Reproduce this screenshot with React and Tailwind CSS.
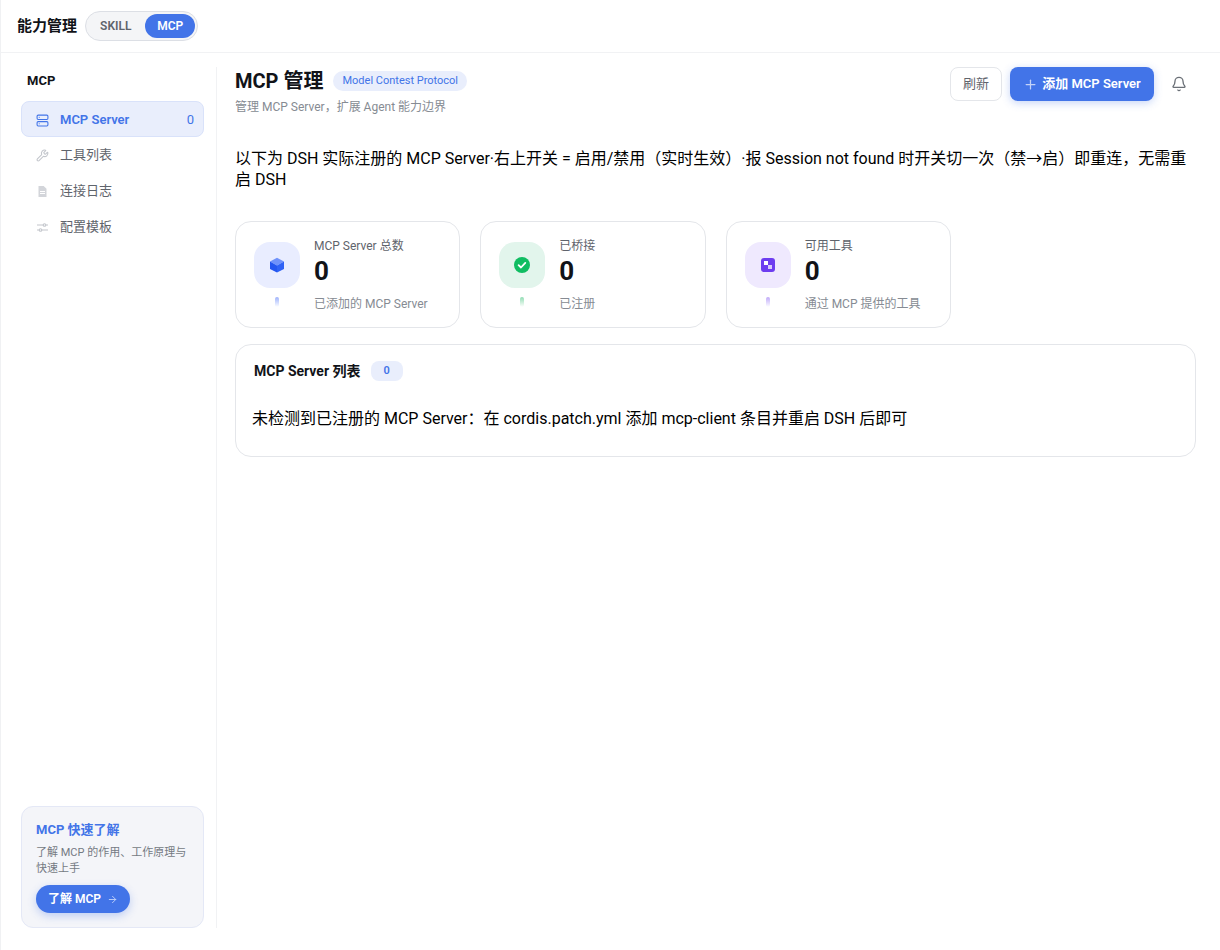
import React from 'react'
import { Server, Wrench, Plus, Bell, ArrowRight } from 'lucide-react'

const FONT = "font-['Roboto','Noto_Sans_CJK_SC',sans-serif]"

const Cube = () => (
  <svg width="16" height="16" viewBox="0 0 16 16">
    <path d="M8 .8l7 3.7L8 8.4 1 4.5z" fill="#6f92fb" />
    <path d="M1 4.5l7 3.9v7.2l-7-3.7z" fill="#2456f0" />
    <path d="M15 4.5L8 8.4v7.2l7-3.7z" fill="#2f62f5" />
  </svg>
)

const Check = () => (
  <svg width="16" height="16" viewBox="0 0 16 16">
    <circle cx="8" cy="8" r="8" fill="#10bd62" />
    <path d="M4.6 8.2l2.4 2.3 4.3-4.6" fill="none" stroke="#fff" strokeWidth="1.8" strokeLinecap="round" strokeLinejoin="round" />
  </svg>
)

const Squares = () => (
  <svg width="14" height="14" viewBox="0 0 14 14">
    <rect width="14" height="14" rx="3" fill="#6d3df0" />
    <rect x="3" y="3" width="4" height="4" fill="#fff" />
    <rect x="7" y="7" width="4" height="4" fill="#d9ccfb" />
  </svg>
)

const DocIcon = () => (
  <svg width="13" height="13" viewBox="0 0 13 13">
    <path d="M2.5 1h5.2L10.500 3.800V12h-8z" fill="#d3d5da" />
    <path d="M4 6.500h5M4 8.500h5" stroke="#fff" strokeWidth="1" />
  </svg>
)

const SliderIcon = () => (
  <svg width="13" height="13" viewBox="0 0 13 13" fill="none" stroke="#c3c6cc" strokeWidth="1.100">
    <path d="M1 4h6M10 4h2M1 9h2M6 9h6" />
    <circle cx="8.500" cy="4" r="1.300" />
    <circle cx="4.500" cy="9" r="1.300" />
  </svg>
)

const navItems = [
  { label: '工具列表', icon: <Wrench size={13} className="text-[#c3c6cc]" /> },
  { label: '连接日志', icon: <DocIcon /> },
  { label: '配置模板', icon: <SliderIcon /> },
]

const stats = [
  { title: 'MCP Server 总数', sub: '已添加的 MCP Server', box: 'bg-[#e9edff]', bar: 'from-[#9fb2fb]', icon: <Cube /> },
  { title: '已桥接', sub: '已注册', box: 'bg-[#e2f5ec]', bar: 'from-[#8fdcb3]', icon: <Check /> },
  { title: '可用工具', sub: '通过 MCP 提供的工具', box: 'bg-[#efe9fe]', bar: 'from-[#c0a9f8]', icon: <Squares /> },
]

const StatCard = ({ title, sub, box, bar, icon }) => (
  <div className="w-[225.33px] h-[107px] rounded-2xl border border-[#e4e6ea] bg-white flex pl-[18px]">
    <div className="flex flex-col items-center w-[46px] pt-5">
      <div className={`w-[46px] h-[46px] rounded-2xl flex items-center justify-center ${box}`}>{icon}</div>
      <div className={`w-1 h-2.5 mt-[9px] rounded-full bg-gradient-to-b to-white ${bar}`}></div>
    </div>
    <div className="ml-[14px] pt-4">
      <div className="text-xs leading-4 text-[#5f646c]">{title}</div>
      <div className="text-[26px] leading-[34px] font-bold text-[#111318]">0</div>
      <div className="text-xs leading-4 text-[#868b93] mt-2">{sub}</div>
    </div>
  </div>
)

export default function App() {
  return (
    <div className={`h-screen flex flex-col bg-white text-black border-l border-[#f0f1f3] ${FONT}`}>
      {/* top bar */}
      <div className="h-[53px] shrink-0 border-b border-[#f1f2f4] flex items-center pl-4">
        <span className="text-[15px] font-bold text-[#111318]">能力管理</span>
        <div className="ml-2 h-[30px] w-[113px] rounded-full border border-[#dcdfe5] bg-[#f4f5f7] flex items-center p-0.5">
          <span className="w-[56px] text-center text-xs font-semibold text-[#5f646c]">SKILL</span>
          <span className="ml-0.5 w-[50px] h-6 rounded-full bg-[#4274e8] text-white text-xs font-semibold flex items-center justify-center">MCP</span>
        </div>
      </div>

      <div className="flex-1 flex min-h-0 pt-3.5 pb-[22px]">
        {/* sidebar */}
        <div className="w-[216px] shrink-0 border-r border-[#f1f2f4] pl-5 pr-3 flex flex-col">
          <div className="pl-1.5 pt-[5px] text-[13px] font-bold leading-[18px] text-[#111318]">MCP</div>
          <div className="mt-[11px] h-9 pt-0.5 rounded-lg border border-[#d9e2fa] bg-[#e9eefc] flex items-center pl-3.5 pr-[9px] text-[#4274e8] text-[13px] font-semibold">
            <Server size={13} />
            <span className="ml-[11px] flex-1">MCP Server</span>
            <span className="font-normal">0</span>
          </div>
          {navItems.map((item) => (
            <div key={item.label} className="h-9 flex items-center pl-[15px] text-[13px] text-[#5f646c]">
              {item.icon}
              <span className="ml-[11px]">{item.label}</span>
            </div>
          ))}
          <div className="mt-auto h-[122px] rounded-xl border border-[#e4e8f6] bg-[#f4f5f9] pl-3.5 pt-3.5">
            <div className="text-[13px] leading-[18px] font-bold text-[#4274e8]">MCP 快速了解</div>
            <div className="mt-1.5 w-[155px] text-[11px] leading-4 text-[#747a83]">了解 MCP 的作用、工作原理与快速上手</div>
            <div className="mt-2 w-[94px] h-7 rounded-full bg-[#4274e8] shadow-[0_3px_8px_rgba(66,116,232,0.3)] text-white text-xs font-semibold flex items-center justify-center gap-1.5">
              了解 MCP
              <ArrowRight size={11} className="text-[#c3d2f8]" />
            </div>
          </div>
        </div>

        {/* main */}
        <div className="flex-1 min-w-0 pl-[18px] pr-6">
          <div className="flex items-start">
            <div className="flex-1">
              <div className="flex items-center h-7">
                <h1 className="text-xl font-bold text-[#111318]">MCP 管理</h1>
                <span className="ml-2.5 h-5 px-[9px] rounded-full bg-[#e9eefc] text-[#4274e8] text-[11px] flex items-center">Model Contest Protocol</span>
              </div>
              <div className="mt-1 text-xs leading-4 text-[#868b93]">管理 MCP Server，扩展 Agent 能力边界</div>
            </div>
            <button className="h-[34px] w-[52px] rounded-lg border border-[#e4e6ea] bg-white text-[13px] text-[#5f646c]">刷新</button>
            <button className="ml-2 h-[34px] w-36 rounded-lg bg-[#4274e8] shadow-[0_2px_8px_rgba(66,116,232,0.3)] text-white text-[13px] font-semibold flex items-center justify-center gap-1">
              <Plus size={15} className="text-[#c3d2f8]" />
              添加 MCP Server
            </button>
            <div className="ml-[17px] mr-[9px] h-[34px] flex items-center text-[#6b7077]">
              <Bell size={16} />
            </div>
          </div>

          <p className="mt-[33px] text-base leading-[21px] text-black [text-spacing-trim:space-all]">
            以下为 DSH 实际注册的 MCP Server·右上开关 = 启用/禁用（实时生效）·报 Session not found 时开关切一次（禁→启）即重连，无需重启 DSH
          </p>

          <div className="mt-[31px] flex gap-5">
            {stats.map((s) => (
              <StatCard key={s.title} {...s} />
            ))}
          </div>

          <div className="mt-4 h-[113px] rounded-2xl border border-[#e4e6ea] bg-white">
            <div className="flex items-center pl-[18px] pt-4">
              <span className="text-sm leading-5 font-bold text-[#111318]">MCP Server 列表</span>
              <span className="ml-2.5 w-8 h-5 rounded-lg bg-[#e9eefc] text-[#4274e8] text-[11px] font-semibold flex items-center justify-center">0</span>
            </div>
            <p className="mt-[27px] pl-4 text-base leading-[21px] text-black">
              未检测到已注册的 MCP Server：在 cordis.patch.yml 添加 mcp-client 条目并重启 DSH 后即可
            </p>
          </div>
        </div>
      </div>
    </div>
  )
}
